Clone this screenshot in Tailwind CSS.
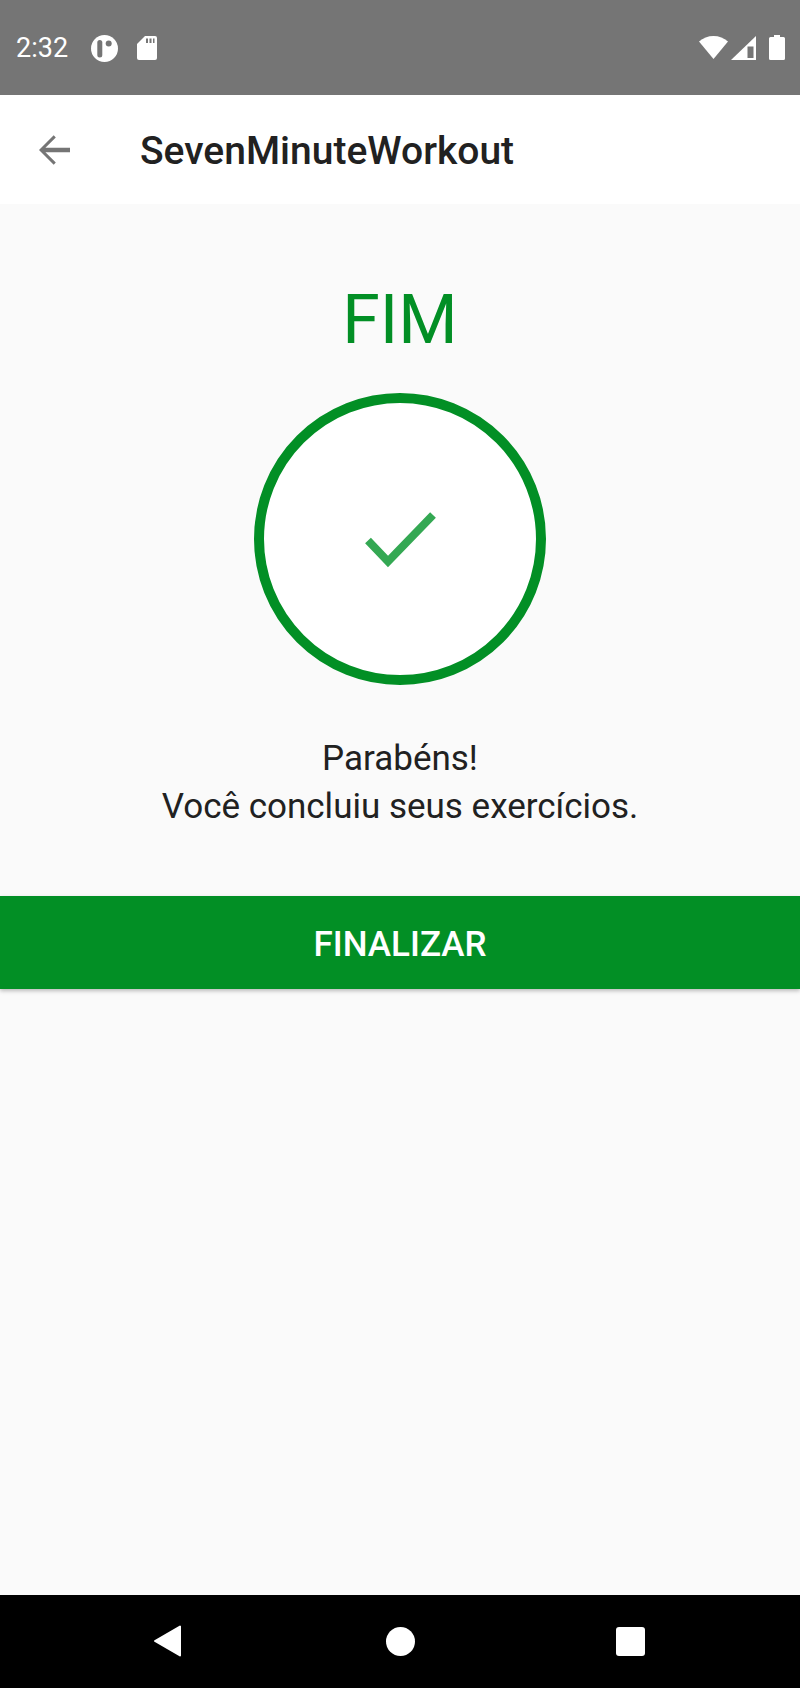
<!DOCTYPE html>
<html lang="en">
<head>
    <meta charset="UTF-8">
    <meta name="viewport" content="width=device-width, initial-scale=1.0">
    <title>SevenMinuteWorkout</title>
    <script src="https://cdn.jsdelivr.net/npm/@tailwindcss/browser@4"></script>
</head>
<body class="w-[800px] h-[1688px] flex flex-col overflow-hidden bg-[#fafafa] font-['Roboto',sans-serif]">
    <!-- Status bar -->
    <div class="h-[95px] bg-[#757575] flex items-center pl-[16px] pr-[15px] text-white">
        <span class="text-[27px] leading-[32px] w-[75px] mt-[1px]">2:32</span>
        <svg class="w-[27px] h-[27px] mt-[1px]" viewBox="0 0 27 27">
            <circle cx="13.5" cy="13.5" r="13.5" fill="#fff"/>
            <rect x="6.300" y="5" width="5" height="17.500" rx="2.500" fill="#757575"/>
            <circle cx="17.700" cy="8.500" r="3" fill="#757575"/>
        </svg>
        <svg class="w-[20px] h-[24px] ml-[19px]" viewBox="0 0 20 24">
            <path d="M8 0H18a2 2 0 0 1 2 2V22a2 2 0 0 1-2 2H2a2 2 0 0 1-2-2V8Z" fill="#fff"/>
            <path d="M9 2.500h2v4.500H9ZM12.500 2.500h2v4.500h-2ZM16 2.500h1.500v4.500H16Z" fill="#757575"/>
        </svg>
        <div class="flex-1"></div>
        <svg class="w-[29px] h-[23px]" viewBox="0 0 29 23">
            <path d="M14.500 23 0 5.500C4 2 9 0 14.500 0S25 2 29 5.500Z" fill="#fff"/>
        </svg>
        <svg class="w-[25px] h-[24px] ml-[3px]" viewBox="0 0 25 24">
            <path d="M25 0V24H0Z" fill="#fff"/>
            <rect x="16.500" y="10.500" width="6" height="11.500" fill="#757575"/>
        </svg>
        <svg class="w-[16px] h-[25px] ml-[13px]" viewBox="0 0 16 25">
            <path d="M5 0h6v2h3.500A1.500 1.500 0 0 1 16 3.500V23.500A1.500 1.500 0 0 1 14.500 25H1.500A1.500 1.500 0 0 1 0 23.500V3.500A1.500 1.500 0 0 1 1.500 2H5Z" fill="#fff"/>
        </svg>
    </div>

    <!-- App bar -->
    <div class="h-[109px] bg-white flex items-center">
        <svg class="w-[31px] h-[30px] ml-[39px]" viewBox="0 0 31 30">
            <path d="M31 12.800H6.400L16.800 2.400 14.700 .3 0 15 14.700 29.700 16.800 27.600 6.400 17.200H31Z" fill="#757575"/>
        </svg>
        <h1 class="ml-[70px] mt-[3px] text-[39px] leading-[48px] font-medium text-[#212121]">SevenMinuteWorkout</h1>
    </div>

    <!-- Content -->
    <div class="flex-1 flex flex-col items-center">
        <p class="mt-[76px] text-[68px] leading-[80px] text-[#028f25]">FIM</p>
        <div class="mt-[33px] mr-[1px] w-[292px] h-[292px] rounded-full border-[10px] border-[#028f25] bg-white flex items-center justify-center">
            <svg class="w-[72px] h-[56px] ml-[1px] mt-[1px]" viewBox="0 0 72 56">
                <path d="M4 28.500 24 49.500 69 3" fill="none" stroke="#34a853" stroke-width="8"/>
            </svg>
        </div>
        <p class="mt-[50px] text-[35px] leading-[48px] text-[#212121] text-center">Parabéns!<br>Você concluiu seus exercícios.</p>
        <button class="mt-[65px] w-full h-[93px] pt-[5px] bg-[#028f25] text-white text-[35px] font-medium shadow-[0_2px_4px_rgba(0,0,0,0.25)]">FINALIZAR</button>
    </div>

    <!-- Navigation bar -->
    <div class="h-[93px] bg-black relative">
        <svg class="absolute left-[153px] top-[30px] w-[29px] h-[32px]" viewBox="0 0 29 32">
            <path d="M27 1.500V30.500L2 16Z" fill="#fff" stroke="#fff" stroke-width="2" stroke-linejoin="round"/>
        </svg>
        <div class="absolute left-[386px] top-[32px] w-[29px] h-[29px] rounded-full bg-white"></div>
        <div class="absolute left-[616px] top-[32px] w-[29px] h-[29px] rounded-[3px] bg-white"></div>
    </div>
</body>
</html>
